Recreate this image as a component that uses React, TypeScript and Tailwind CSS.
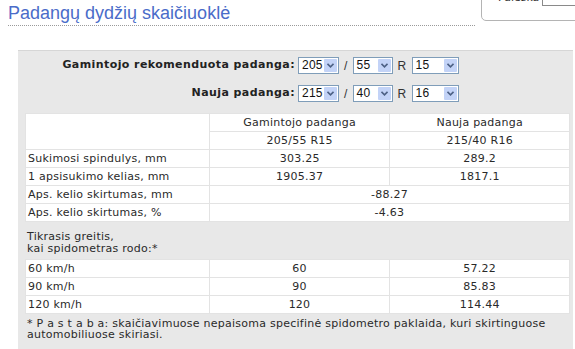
import React from 'react';

const font = { fontFamily: '"DejaVu Sans", Verdana, sans-serif' };

function Select({ value, width }: { value: string; width: string }) {
  return (
    <div className={`relative h-[17px] ${width} border border-[#7f9db9] bg-white`}>
      <span className="absolute left-[3px] top-[0px] text-[12px] leading-[15px] text-[#111]" style={{ fontFamily: '"Liberation Sans", Arial, sans-serif' }}>
        {value}
      </span>
      <span className="absolute right-[1px] top-[1px] flex h-[13px] w-[13px] items-center justify-center rounded-[1px] bg-[#c3d3f7]">
        <svg width="7" height="5" viewBox="0 0 7 5">
          <path d="M0.5 0.8 L3.5 3.8 L6.5 0.8" fill="none" stroke="#4d6185" strokeWidth="1.6" />
        </svg>
      </span>
    </div>
  );
}

function TireRow({ label, w, h, r }: { label: string; w: string; h: string; r: string }) {
  return (
    <div className="flex h-[17px] items-center">
      <div className="w-[279px] pr-[2px] text-right text-[11px] font-bold tracking-[0.42px] text-[#222]">{label}</div>
      <div className="ml-[1px] flex items-center">
        <Select value={w} width="w-[41px]" />
        <span className="mx-[5px] text-[12px] text-[#333]" style={{ fontFamily: '"Liberation Sans", Arial, sans-serif' }}>/</span>
        <Select value={h} width="w-[40px]" />
        <span className="mx-[5px] text-[12px] text-[#333]" style={{ fontFamily: '"Liberation Sans", Arial, sans-serif' }}>R</span>
        <Select value={r} width="w-[47px]" />
      </div>
    </div>
  );
}

const cell = 'border border-[#e3e3e3] h-[18px] px-[2px] leading-[16px] whitespace-nowrap';

export default function App() {
  const results = [
    ['Sukimosi spindulys, mm', '303.25', '289.2'],
    ['1 apsisukimo kelias, mm', '1905.37', '1817.1'],
  ];
  const diffs = [
    ['Aps. kelio skirtumas, mm', '-88.27'],
    ['Aps. kelio skirtumas, %', '-4.63'],
  ];
  const speeds = [
    ['60 km/h', '60', '57.22'],
    ['90 km/h', '90', '85.83'],
    ['120 km/h', '120', '114.44'],
  ];

  return (
    <div className="relative h-[349px] w-[575px] overflow-hidden bg-white text-[#2a2a2a]" style={font}>
      {/* search box, mostly scrolled off the top */}
      <div className="absolute left-[481px] top-[-10px] h-[31px] w-[110px] rounded-bl-[5px] border border-[#b4b4b4] bg-white">
        <span className="absolute left-[16px] top-[1px] text-[11px] leading-[12px] text-[#333]">Paieška</span>
        <span className="absolute left-[60px] top-[-1px] h-[16px] w-[60px] border border-[#8a8a8a] bg-white" />
      </div>

      <div className="ml-[8px] w-[467px] border-b border-dotted border-[#9a9a9a]">
        <h1 className="pt-[3px] pb-[2px] text-[18px] leading-[20px] text-[#4a6cc9]" style={{ fontFamily: '"Liberation Sans", Arial, sans-serif' }}>
          Padangų dydžių skaičiuoklė
        </h1>
      </div>

      <div className="ml-[18px] mt-[24px] w-[555px] border-t border-[#d6d6d6] bg-[#e8e8e8] pb-[20px] pt-[6px] text-[11px] tracking-[0.25px]">
        <div className="flex flex-col gap-[11px]">
          <TireRow label="Gamintojo rekomenduota padanga:" w="205" h="55" r="15" />
          <TireRow label="Nauja padanga:" w="215" h="40" r="16" />
        </div>

        <table className="ml-[7px] mt-[11px] w-[545px] border-collapse bg-white text-[11px]">
          <colgroup>
            <col className="w-[184px]" />
            <col className="w-[181px]" />
            <col className="w-[180px]" />
          </colgroup>
          <tbody>
            <tr>
              <td className={cell} rowSpan={2}></td>
              <td className={`${cell} text-center`}>Gamintojo padanga</td>
              <td className={`${cell} text-center`}>Nauja padanga</td>
            </tr>
            <tr>
              <td className={`${cell} text-center`}>205/55 R15</td>
              <td className={`${cell} text-center`}>215/40 R16</td>
            </tr>
            {results.map(([l, a, b]) => (
              <tr key={l}>
                <td className={cell}>{l}</td>
                <td className={`${cell} text-center`}>{a}</td>
                <td className={`${cell} text-center`}>{b}</td>
              </tr>
            ))}
            {diffs.map(([l, v]) => (
              <tr key={l}>
                <td className={cell}>{l}</td>
                <td className={`${cell} text-center`} colSpan={2}>{v}</td>
              </tr>
            ))}
          </tbody>
        </table>

        <div className="ml-[7px] mt-[9px] px-[2px] leading-[12px]">
          Tikrasis greitis,
          <br />
          kai spidometras rodo:*
        </div>

        <table className="ml-[7px] mt-[4px] w-[545px] border-collapse bg-white text-[11px]">
          <colgroup>
            <col className="w-[184px]" />
            <col className="w-[181px]" />
            <col className="w-[180px]" />
          </colgroup>
          <tbody>
            {speeds.map(([l, a, b]) => (
              <tr key={l}>
                <td className={cell}>{l}</td>
                <td className={`${cell} text-center`}>{a}</td>
                <td className={`${cell} text-center`}>{b}</td>
              </tr>
            ))}
          </tbody>
        </table>

        <p className="ml-[7px] mt-[4px] w-[545px] px-[2px] leading-[11px]">
          * P a s t a b a: skaičiavimuose nepaisoma specifinė spidometro paklaida, kuri skirtinguose automobiliuose skiriasi.
        </p>
      </div>
    </div>
  );
}
